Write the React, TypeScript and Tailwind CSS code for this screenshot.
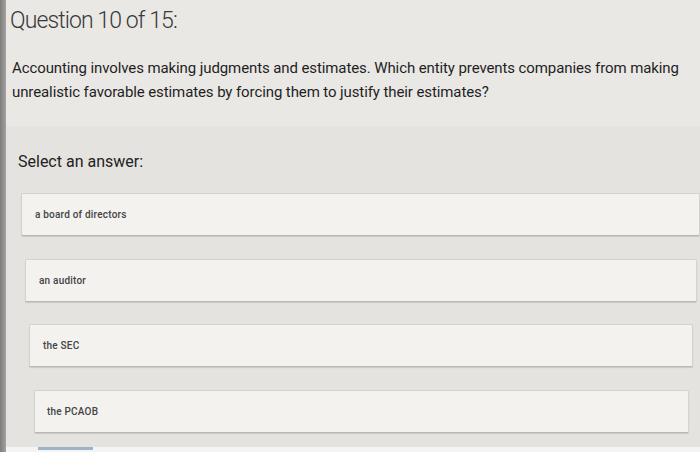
import React from 'react';

const answers = [
  { label: 'a board of directors', className: 'ml-[15px] mr-0 mt-[21px] pl-[13px]' },
  { label: 'an auditor', className: 'ml-[19px] mr-[3px] mt-[23px] pl-[13px]' },
  { label: 'the SEC', className: 'ml-[23px] mr-[7px] mt-[22px] pl-[13px]' },
  { label: 'the PCAOB', className: 'ml-[28px] mr-[11px] mt-[23px] pl-[12px]' },
];

const App: React.FC = () => {
  return (
    <div className="flex h-[452px] w-[700px] overflow-hidden bg-[#e5e3df] font-['Roboto',sans-serif]">
      <div className="w-[6px] shrink-0 bg-gradient-to-r from-[#7d7d7c] to-[#a3a2a0]" />

      <div className="flex min-w-0 flex-1 flex-col">
        <div className="bg-[#e9e8e5] pb-[22px]">
          <h1 className="pl-[4px] pt-[6px] text-[23px] font-light leading-[30px] tracking-[-0.9px] text-[#3a3a3a]">
            Question 10 of 15:
          </h1>
          <p className="mt-[20px] pl-[6px] pr-[4px] text-[15px] leading-[24px] tracking-[-0.1px] text-[#1f1f1f]">
            Accounting involves making judgments and estimates. Which entity prevents companies from making
            unrealistic favorable estimates by forcing them to justify their estimates?
          </p>
        </div>

        <div className="flex flex-1 flex-col">
          <p className="mt-[26px] pl-[12px] text-[16px] leading-[20px] text-[#222]">Select an answer:</p>

          {answers.map((answer) => (
            <div
              key={answer.label}
              className={`flex h-[43px] items-center rounded-[2px] border border-[#d3d2ce] border-b-[#b9b8b4] bg-[#f3f2ef] shadow-[0_1px_1px_rgba(0,0,0,0.12)] ${answer.className}`}
            >
              <span className="text-[10px] font-medium tracking-[0.2px] text-[#444]">{answer.label}</span>
            </div>
          ))}

          <div className="mt-auto flex h-[5px] bg-[#f4f4f2]">
            <div className="ml-[32px] h-[3px] w-[55px] bg-[#9fb3c8]" />
          </div>
        </div>
      </div>
    </div>
  );
};

export default App;
